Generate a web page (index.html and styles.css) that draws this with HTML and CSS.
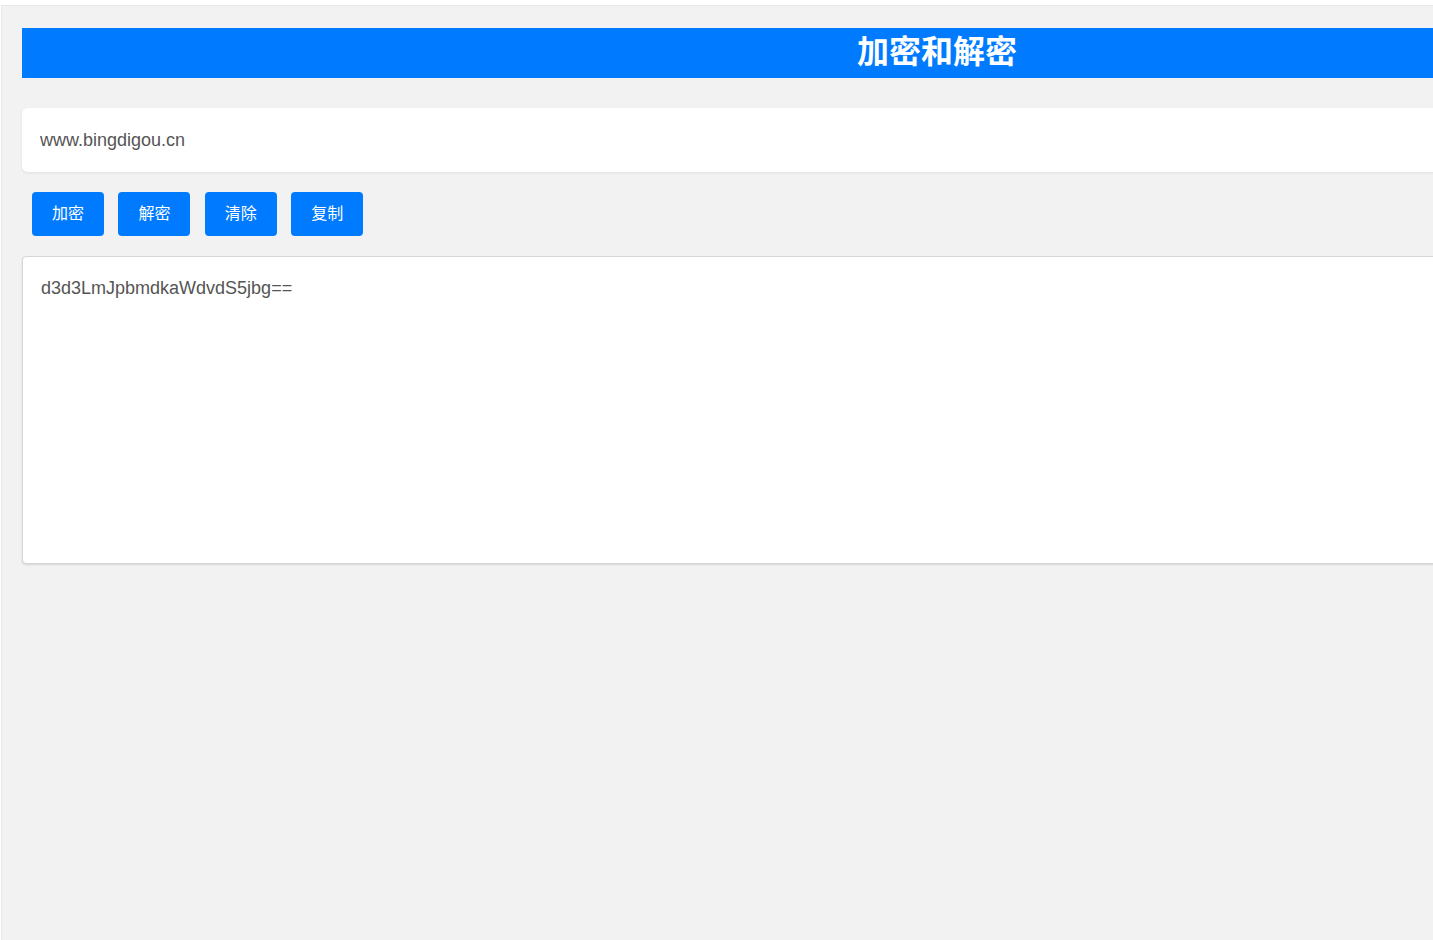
FILE: index.html
```html
<!DOCTYPE html>
<html lang="zh-CN">
<head>
    <meta charset="UTF-8">
    <meta name="viewport" content="width=device-width, initial-scale=1.0">
    <title>加密和解密</title>
    <link rel="stylesheet" href="styles.css">
</head>
<body>
    <div class="page">
        <h1 class="title">加密和解密</h1>

        <input class="source-input" type="text" value="www.bingdigou.cn">

        <div class="actions">
            <button class="action-button">加密</button>
            <button class="action-button">解密</button>
            <button class="action-button">清除</button>
            <button class="action-button">复制</button>
        </div>

        <textarea class="result-output">d3d3LmJpbmdkaWdvdS5jbg==</textarea>
    </div>
</body>
</html>
```

FILE: styles.css
```css
html, body {
    margin: 0;
    padding: 0;
    background-color: #ffffff;
    overflow: hidden;
}
body {
    font-family: "Liberation Sans", Arial, "Noto Sans CJK SC", sans-serif;
}
.page {
    box-sizing: border-box;
    width: 1872px;
    min-height: 100vh;
    margin: 5px 0 0 1px;
    padding: 22px 20px;
    background-color: #f2f2f2;
    border: 1px solid #e8e8e8;
}
.title {
    margin: 0;
    height: 50px;
    line-height: 42px;
    background-color: #007bff;
    color: #ffffff;
    font-size: 32px;
    font-weight: bold;
    text-align: center;
    font-family: "Noto Sans CJK SC", sans-serif;
}
.source-input {
    display: block;
    box-sizing: border-box;
    width: 100%;
    height: 64px;
    margin-top: 30px;
    padding: 0 18px;
    border: none;
    border-radius: 6px;
    background-color: #ffffff;
    box-shadow: 0 1px 3px rgba(0, 0, 0, 0.08);
    font-family: "Liberation Sans", Arial, sans-serif;
    font-size: 18px;
    color: #555555;
    outline: none;
}
.actions {
    display: flex;
    gap: 14.4px;
    margin: 20px 0 20px 10px;
}
.action-button {
    width: 72px;
    height: 44px;
    padding: 0 0 4px;
    border: none;
    border-radius: 4px;
    background-color: #007bff;
    color: #ffffff;
    font-size: 16px;
    font-family: "Noto Sans CJK SC", sans-serif;
    cursor: pointer;
}
.result-output {
    display: block;
    box-sizing: border-box;
    width: 100%;
    height: 308px;
    padding: 21px 18px;
    border: 1px solid #d6d6d6;
    border-radius: 4px;
    background-color: #ffffff;
    box-shadow: 0 1px 2px rgba(0, 0, 0, 0.12);
    font-family: "Liberation Sans", Arial, sans-serif;
    font-size: 18px;
    color: #555555;
    resize: none;
    outline: none;
}
```
